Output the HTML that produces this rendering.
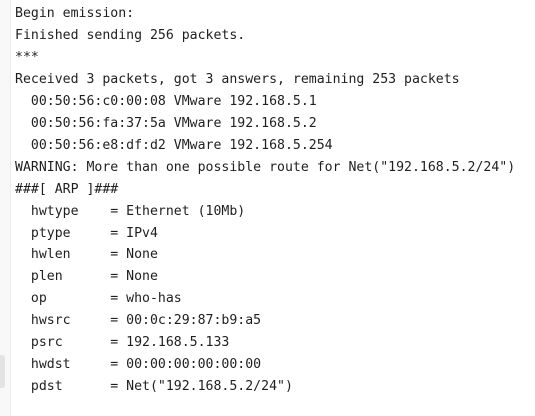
<!DOCTYPE html>
<html><head><meta charset="utf-8"><style>
html,body{margin:0;padding:0;width:535px;height:416px;overflow:hidden;background:#fff;}
.strip{position:absolute;left:0;top:0;width:10px;height:416px;background:#f8f8f9;border-right:1px solid #ededed;}
.thumb{position:absolute;left:0;top:355px;width:5px;height:33px;background:#e3e3e5;border-radius:0 3px 3px 0;}
pre{position:absolute;left:15px;top:3px;margin:0;font-family:"DejaVu Sans Mono","Liberation Mono",monospace;font-size:13.2px;line-height:21.95px;color:#1f1f1f;}
</style></head><body>
<div class="strip"></div><div class="thumb"></div>
<pre>Begin emission:
Finished sending 256 packets.
***
Received 3 packets, got 3 answers, remaining 253 packets
  00:50:56:c0:00:08 VMware 192.168.5.1
  00:50:56:fa:37:5a VMware 192.168.5.2
  00:50:56:e8:df:d2 VMware 192.168.5.254
WARNING: More than one possible route for Net("192.168.5.2/24")
###[ ARP ]###
  hwtype    = Ethernet (10Mb)
  ptype     = IPv4
  hwlen     = None
  plen      = None
  op        = who-has
  hwsrc     = 00:0c:29:87:b9:a5
  psrc      = 192.168.5.133
  hwdst     = 00:00:00:00:00:00
  pdst      = Net("192.168.5.2/24")
</pre>
</body></html>
